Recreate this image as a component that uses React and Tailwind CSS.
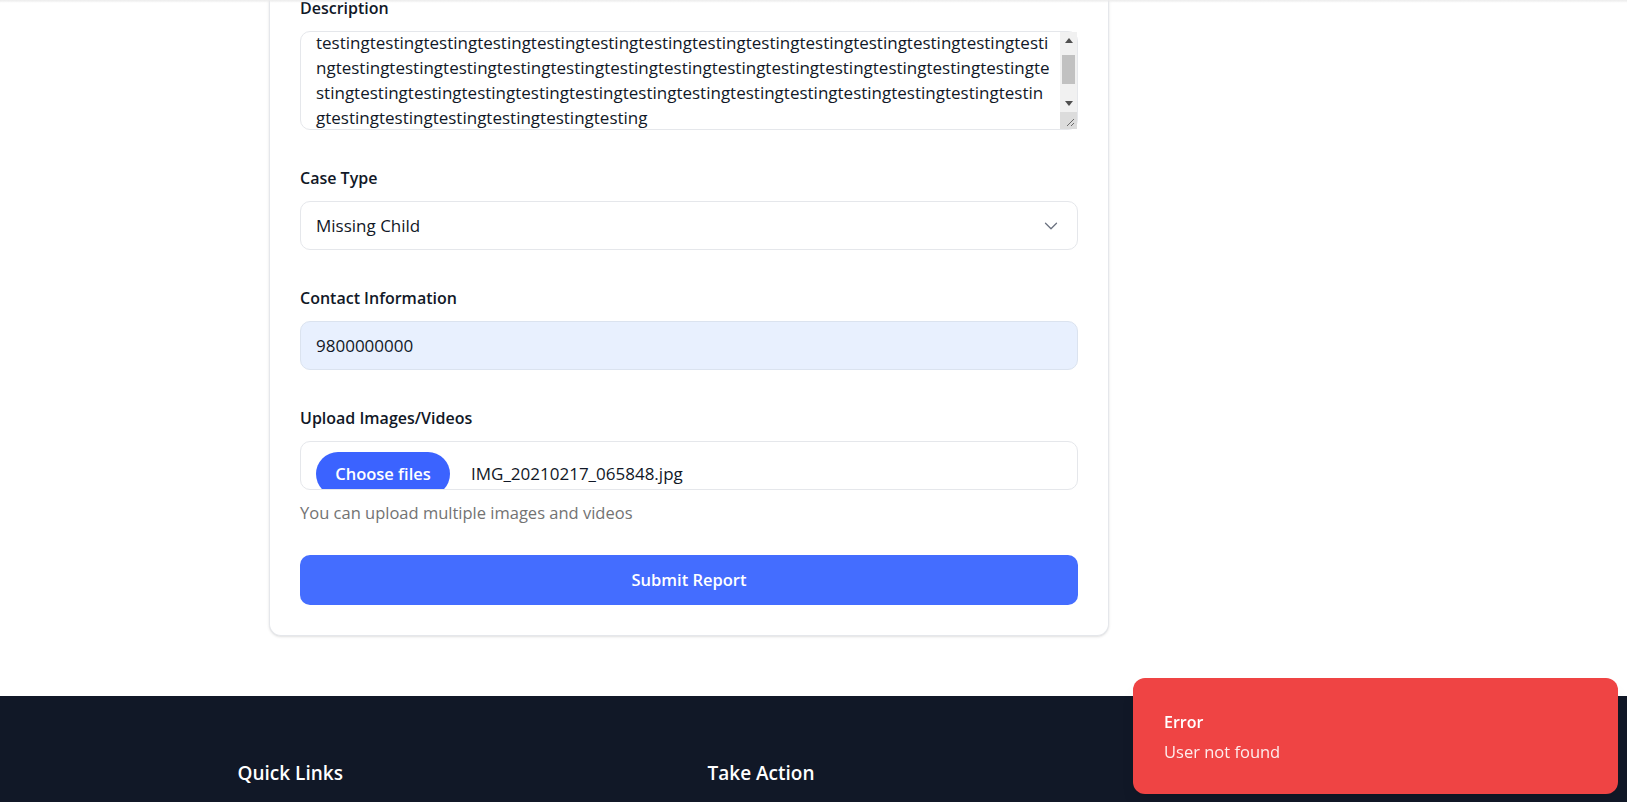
import { ChevronDown } from 'lucide-react';

const descLines = [
  'testing'.repeat(13) + 'testi',
  'ng' + 'testing'.repeat(13) + 'te',
  'sting' + 'testing'.repeat(12) + 'testin',
  'g' + 'testing'.repeat(6),
];

const FakeScrollbar = () => (
  <div className="flex flex-col w-[17px] shrink-0 bg-[#f1f1f1]">
    <div className="h-[17px] flex items-center justify-center">
      <svg width="8" height="5" viewBox="0 0 8 5">
        <path d="M0 5 L4 0 L8 5 Z" fill="#505050" />
      </svg>
    </div>
    <div className="flex-1 px-[2px] pt-[6px] pb-[4px]">
      <div className="h-[29px] bg-[#c1c1c1]" />
    </div>
    <div className="h-[17px] flex items-center justify-center">
      <svg width="8" height="5" viewBox="0 0 8 5">
        <path d="M0 0 L8 0 L4 5 Z" fill="#505050" />
      </svg>
    </div>
    <div className="h-[17px] bg-[#dcdcdc] flex items-end justify-end p-[2px]">
      <svg width="9" height="9" viewBox="0 0 9 9">
        <path d="M8 1 L1 8 M8 5 L5 8" stroke="#6b6b6b" strokeWidth="1" />
      </svg>
    </div>
  </div>
);

const Field = ({ label, children, className = '' }) => (
  <div className={className}>
    <label className="block text-[16px] font-semibold leading-[24px] mb-[11px] text-[#111827]">{label}</label>
    {children}
  </div>
);

export default function App() {
  return (
    <div className="min-h-screen bg-white font-['Open_Sans',sans-serif] text-[#111827]">
      {/* header shadow peeking at the top */}
      <div className="fixed top-0 inset-x-0 h-[3px] bg-gradient-to-b from-[#ebebeb] to-transparent" />

      {/* Form card (page scrolled, top of card is off screen) */}
      <div className="ml-[269px] pb-[60px]">
        <div className="w-[840px] -mt-[4px] bg-white border-x border-b border-[#e5e7eb] rounded-b-xl shadow-sm px-[30px] pb-[30px]">
          <Field label="Description">
            <div className="flex h-[99px] border border-[#e5e7eb] rounded-[10px] bg-white">
              <div className="flex-1 overflow-hidden pl-[15px]">
                <div className="-mt-[2px] text-[17px] leading-[25px] text-[#111827]">
                  {descLines.map((line, i) => (
                    <div key={i} className="whitespace-nowrap">{line}</div>
                  ))}
                </div>
              </div>
              <FakeScrollbar />
            </div>
          </Field>

          <Field label="Case Type" className="mt-[36px]">
            <div className="flex items-center justify-between h-[49px] border border-[#e5e7eb] rounded-[10px] pl-[15px] pr-[15px] bg-white">
              <span className="text-[17px]">Missing Child</span>
              <ChevronDown size={22} strokeWidth={1.4} className="text-[#6b7280]" />
            </div>
          </Field>

          <Field label="Contact Information" className="mt-[36px]">
            <div className="flex items-center h-[49px] border border-[#dbe3ef] rounded-[10px] pl-[15px] bg-[#e8f0fe]">
              <span className="text-[17px]">9800000000</span>
            </div>
          </Field>

          <Field label="Upload Images/Videos" className="mt-[36px]">
            <div className="h-[49px] border border-[#e5e7eb] rounded-[10px] overflow-hidden pl-[15px] pt-[10px] bg-white">
              <div className="flex items-center gap-[21px]">
                <span className="inline-flex items-center justify-center h-[44px] w-[134px] rounded-full bg-[#3b63ff] text-white font-semibold text-[16.5px]">
                  Choose files
                </span>
                <span className="text-[17px]">IMG_20210217_065848.jpg</span>
              </div>
            </div>
            <p className="mt-[10px] text-[16.5px] leading-[25px] text-[#737373]">You can upload multiple images and videos</p>
          </Field>

          <button className="mt-[30px] w-full h-[50px] rounded-[10px] bg-[#446dff] text-white font-semibold text-[16.5px]">
            Submit Report
          </button>
        </div>
      </div>

      {/* Footer */}
      <footer className="bg-[#111827] text-white">
        <div className="max-w-7xl mx-auto px-16 pt-[63px] pb-16">
          <div className="grid grid-cols-[438px_438px_1fr] gap-8">
            <div>
              <h3 className="text-[19px] font-semibold">Quick Links</h3>
            </div>
            <div>
              <h3 className="text-[19px] font-semibold">Take Action</h3>
            </div>
            <div />
          </div>
        </div>
      </footer>

      {/* Toast */}
      <div className="fixed bottom-[8px] right-[9px] w-[485px] h-[116px] rounded-xl bg-[#ef4444] shadow-lg px-[31px] pt-[33px]">
        <div className="text-[16px] font-semibold leading-[22px] text-white">Error</div>
        <div className="mt-[7px] text-[16.5px] leading-[24px] text-white/90">User not found</div>
      </div>
    </div>
  );
}
